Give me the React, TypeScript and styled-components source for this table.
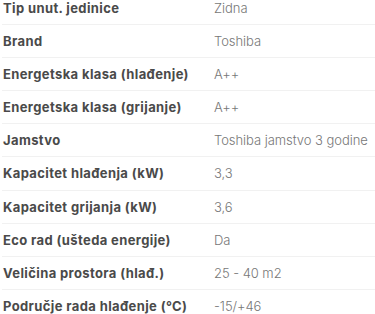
import styled, { createGlobalStyle } from 'styled-components';

const GlobalStyle = createGlobalStyle`
  html, body {
    margin: 0;
    padding: 0;
    background: #ffffff;
    overflow: hidden;
  }
`;

const Table = styled.table`
  width: calc(100% - 2px);
  margin: -8px 0 0 2px;
  border-collapse: collapse;
  font-family: Inter, "Noto Sans", sans-serif;
  font-size: 13px;
`;

const Row = styled.tr`
  border-bottom: 1px solid #f1f1f1;
`;

const Label = styled.th`
  width: 211px;
  padding: 8px 0 8px 1px;
  line-height: 16.1px;
  text-align: left;
  font-weight: 700;
  letter-spacing: 0.38px;
  color: #4a4a4a;
  white-space: nowrap;
`;

const Value = styled.td`
  padding: 8px 0;
  line-height: 16.1px;
  font-weight: 300;
  letter-spacing: -0.05px;
  color: #777777;
  white-space: nowrap;
`;

const specs: [string, string][] = [
  ['Tip unut. jedinice', 'Zidna'],
  ['Brand', 'Toshiba'],
  ['Energetska klasa (hlađenje)', 'A++'],
  ['Energetska klasa (grijanje)', 'A++'],
  ['Jamstvo', 'Toshiba jamstvo 3 godine'],
  ['Kapacitet hlađenja (kW)', '3,3'],
  ['Kapacitet grijanja (kW)', '3,6'],
  ['Eco rad (ušteda energije)', 'Da'],
  ['Veličina prostora (hlađ.)', '25 - 40 m2'],
  ['Područje rada hlađenje (°C)', '-15/+46'],
];

export default function App() {
  return (
    <>
      <GlobalStyle />
      <Table>
        <tbody>
          {specs.map(([label, value]) => (
            <Row key={label}>
              <Label>{label}</Label>
              <Value>{value}</Value>
            </Row>
          ))}
        </tbody>
      </Table>
    </>
  );
}
